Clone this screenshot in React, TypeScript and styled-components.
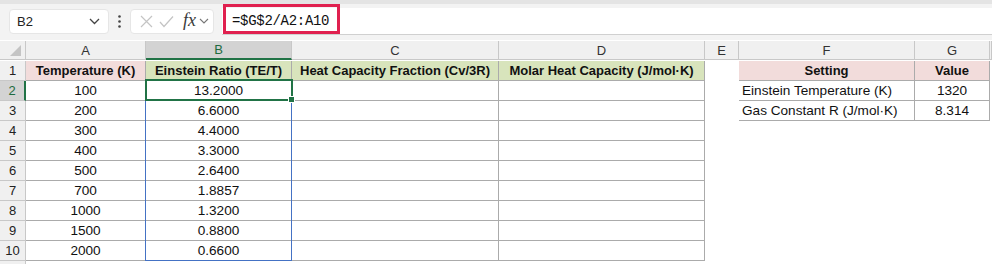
import React from "react";
import styled, { createGlobalStyle } from "styled-components";

const GlobalStyle = createGlobalStyle`
  html, body {
    margin: 0;
    padding: 0;
    background: #ffffff;
  }
  body {
    font-family: "Liberation Sans", Arial, sans-serif;
    width: 992px;
    height: 264px;
    overflow: hidden;
  }
`;

const COLS = [
  { key: "A", width: 120 },
  { key: "B", width: 146 },
  { key: "C", width: 207 },
  { key: "D", width: 206 },
  { key: "E", width: 34 },
  { key: "F", width: 176 },
  { key: "G", width: 75 },
];

type Fill = "pink" | "green" | "none";

interface CellData {
  text?: string;
  fill?: Fill;
  bold?: boolean;
  align?: "left" | "center";
  lined?: boolean;
}

const temps = ["100", "200", "300", "400", "500", "700", "1000", "1500", "2000"];
const ratios = ["13.2000", "6.6000", "4.4000", "3.3000", "2.6400", "1.8857", "1.3200", "0.8800", "0.6600"];

const buildRows = (): CellData[][] => {
  const rows: CellData[][] = [];
  rows.push([
    { text: "Temperature (K)", fill: "pink", bold: true, lined: true },
    { text: "Einstein Ratio (TE/T)", fill: "green", bold: true, lined: true },
    { text: "Heat Capacity Fraction (Cv/3R)", fill: "green", bold: true, lined: true },
    { text: "Molar Heat Capacity (J/mol·K)", fill: "green", bold: true, lined: true },
    {},
    { text: "Setting", fill: "pink", bold: true, lined: true },
    { text: "Value", fill: "pink", bold: true, lined: true },
  ]);
  const settings = [
    ["Einstein Temperature (K)", "1320"],
    ["Gas Constant R (J/mol·K)", "8.314"],
  ];
  for (let i = 0; i < temps.length; i++) {
    const s = settings[i];
    rows.push([
      { text: temps[i], lined: true },
      { text: ratios[i], lined: true },
      { lined: true },
      { lined: true },
      {},
      s ? { text: s[0], align: "left", lined: true } : {},
      s ? { text: s[1], lined: true } : {},
    ]);
  }
  return rows;
};

const fills: Record<Fill, string> = {
  pink: "#f2dcdb",
  green: "#d8e4bc",
  none: "#ffffff",
};

const Toolbar = styled.div`
  height: 40px;
  background: #f3f3f3;
  position: relative;
  display: flex;
  align-items: flex-start;
  padding: 9px 0 0 9px;
  box-sizing: border-box;
  border-top: 4px solid #e4e4e4;
`;

const NameBox = styled.div`
  width: 100px;
  height: 25px;
  flex-shrink: 0;
  background: #ffffff;
  border-radius: 4px;
  box-sizing: border-box;
  border: 1px solid #e6e6e6;
  display: flex;
  align-items: center;
  justify-content: space-between;
  padding: 0 8px 0 7px;
  margin-top: -4px;
  font-size: 13px;
  color: #222;
`;

const Dots = styled.div`
  width: 21px;
  flex-shrink: 0;
  display: flex;
  justify-content: center;
  margin-top: 2px;
`;

const FormulaButtons = styled.div`
  width: 84px;
  height: 25px;
  flex-shrink: 0;
  background: #ffffff;
  border-radius: 4px;
  border: 1px solid #e6e6e6;
  box-sizing: border-box;
  display: flex;
  align-items: center;
  padding: 0 0 0 9px;
  gap: 6px;
  margin-top: -4px;
  svg {
    flex-shrink: 0;
  }
`;

const Fx = styled.span`
  font-family: "Liberation Serif", "Times New Roman", serif;
  font-style: italic;
  font-size: 18px;
  color: #3a3a3a;
  margin-left: 3px;
  margin-right: -3px;
  margin-top: -2px;
`;

const FormulaInput = styled.div`
  flex: 1;
  height: 26px;
  margin-left: 8px;
  margin-top: -5px;
  background: #ffffff;
  border-bottom: 1px solid #d0d0d0;
  position: relative;
  display: flex;
  align-items: center;
`;

const FormulaText = styled.div`
  font-family: "Liberation Mono", "DejaVu Sans Mono", monospace;
  font-size: 14px;
  color: #111;
  margin-left: 10px;
  letter-spacing: -0.3px;
`;

const Highlight = styled.div`
  position: absolute;
  left: 1px;
  top: -4px;
  width: 117px;
  height: 30px;
  border: 3px solid #e0204f;
  box-sizing: border-box;
`;

const GridWrap = styled.div`
  position: relative;
  display: grid;
  grid-template-columns: 26px ${COLS.map((c) => `${c.width}px`).join(" ")} 1fr;
  grid-auto-rows: 20px;
  margin-top: 1px;
  height: 223px;
  overflow: hidden;
`;

const Corner = styled.div`
  background: #f0f0f0;
  border-right: 1px solid #c8c8c8;
  border-bottom: 1px solid #c8c8c8;
  box-sizing: border-box;
  position: relative;
  height: 19px;
`;

const CornerMark = styled.svg`
  position: absolute;
  right: 4px;
  bottom: 3px;
`;

const ColHead = styled.div<{ $active?: boolean }>`
  height: 19px;
  box-sizing: border-box;
  background: ${(p) => (p.$active ? "#d3d3d3" : "#f0f0f0")};
  border-right: 1px solid #c8c8c8;
  border-bottom: ${(p) => (p.$active ? "2px solid #217346" : "1px solid #c8c8c8")};
  color: ${(p) => (p.$active ? "#1e6b40" : "#333")};
  font-size: 13px;
  display: flex;
  align-items: center;
  justify-content: center;
`;

const RowHead = styled.div<{ $active?: boolean }>`
  box-sizing: border-box;
  background: ${(p) => (p.$active ? "#d3d3d3" : "#f0f0f0")};
  border-right: ${(p) => (p.$active ? "2px solid #217346" : "1px solid #c8c8c8")};
  border-bottom: 1px solid #c8c8c8;
  color: ${(p) => (p.$active ? "#1e6b40" : "#222")};
  font-size: 13px;
  display: flex;
  align-items: center;
  justify-content: center;
`;

const Cell = styled.div<{ $fill: Fill; $bold?: boolean; $align: string; $lined?: boolean }>`
  box-sizing: border-box;
  background: ${(p) => fills[p.$fill]};
  border-right: 1px solid ${(p) => (p.$lined ? "#ababab" : "transparent")};
  border-bottom: 1px solid ${(p) => (p.$lined ? "#ababab" : "transparent")};
  font-family: "Liberation Sans", Arial, sans-serif;
  font-size: ${(p) => (p.$bold ? "13px" : "13.6px")};
  font-weight: ${(p) => (p.$bold ? 700 : 400)};
  color: #111;
  display: flex;
  align-items: center;
  justify-content: ${(p) => (p.$align === "left" ? "flex-start" : "center")};
  padding: 0 3px;
  white-space: nowrap;
  overflow: hidden;
`;

const Spacer = styled.div``;

const RangeOutline = styled.div`
  position: absolute;
  left: 145px;
  top: 39px;
  width: 147px;
  height: 181px;
  border: 1px solid #4472c4;
  box-sizing: border-box;
  pointer-events: none;
`;

const ActiveCell = styled.div`
  position: absolute;
  left: 145px;
  top: 38px;
  width: 148px;
  height: 22px;
  border: 2px solid #217346;
  box-sizing: border-box;
  pointer-events: none;
`;

const FillHandle = styled.div`
  position: absolute;
  right: -4px;
  bottom: -4px;
  width: 5px;
  height: 5px;
  background: #217346;
  border: 1px solid #ffffff;
`;

const Chevron = () => (
  <svg width="11" height="7" viewBox="0 0 11 7">
    <path d="M1 1 L5.5 5.5 L10 1" fill="none" stroke="#444" strokeWidth="1.3" />
  </svg>
);

const App = () => {
  const rows = buildRows();
  return (
    <>
      <GlobalStyle />
      <Toolbar>
        <NameBox>
          <span>B2</span>
          <Chevron />
        </NameBox>
        <Dots>
          <svg width="3" height="13" viewBox="0 0 3 13">
            <circle cx="1.5" cy="1.5" r="1.3" fill="#444" />
            <circle cx="1.5" cy="6.5" r="1.3" fill="#444" />
            <circle cx="1.5" cy="11.5" r="1.3" fill="#444" />
          </svg>
        </Dots>
        <FormulaButtons>
          <svg width="13" height="13" viewBox="0 0 13 13">
            <path d="M1 1 L12 12 M12 1 L1 12" stroke="#c4c4c4" strokeWidth="1.2" />
          </svg>
          <svg width="15" height="13" viewBox="0 0 15 13">
            <path d="M1 7 L5 11.5 L14 1.5" fill="none" stroke="#c4c4c4" strokeWidth="1.2" />
          </svg>
          <Fx>fx</Fx>
          <svg width="10" height="7" viewBox="0 0 10 7">
            <path d="M1 1 L5 5 L9 1" fill="none" stroke="#777" strokeWidth="1.1" />
          </svg>
        </FormulaButtons>
        <FormulaInput>
          <Highlight />
          <FormulaText>=$G$2/A2:A10</FormulaText>
        </FormulaInput>
      </Toolbar>
      <GridWrap>
        <Corner>
          <CornerMark width="11" height="11" viewBox="0 0 11 11">
            <path d="M11 0 L11 11 L0 11 Z" fill="#c4c4c4" />
          </CornerMark>
        </Corner>
        {COLS.map((c) => (
          <ColHead key={c.key} $active={c.key === "B"}>
            {c.key}
          </ColHead>
        ))}
        <ColHead />
        {rows.map((row, r) => (
          <React.Fragment key={r}>
            <RowHead $active={r === 1}>{r + 1}</RowHead>
            {row.map((cell, ci) => (
              <Cell
                key={ci}
                $fill={cell.fill ?? "none"}
                $bold={cell.bold}
                $align={cell.align ?? "center"}
                $lined={cell.lined}
              >
                {cell.text}
              </Cell>
            ))}
            <Spacer />
          </React.Fragment>
        ))}
        <RowHead />
        <RangeOutline />
        <ActiveCell>
          <FillHandle />
        </ActiveCell>
      </GridWrap>
    </>
  );
};

export default App;
